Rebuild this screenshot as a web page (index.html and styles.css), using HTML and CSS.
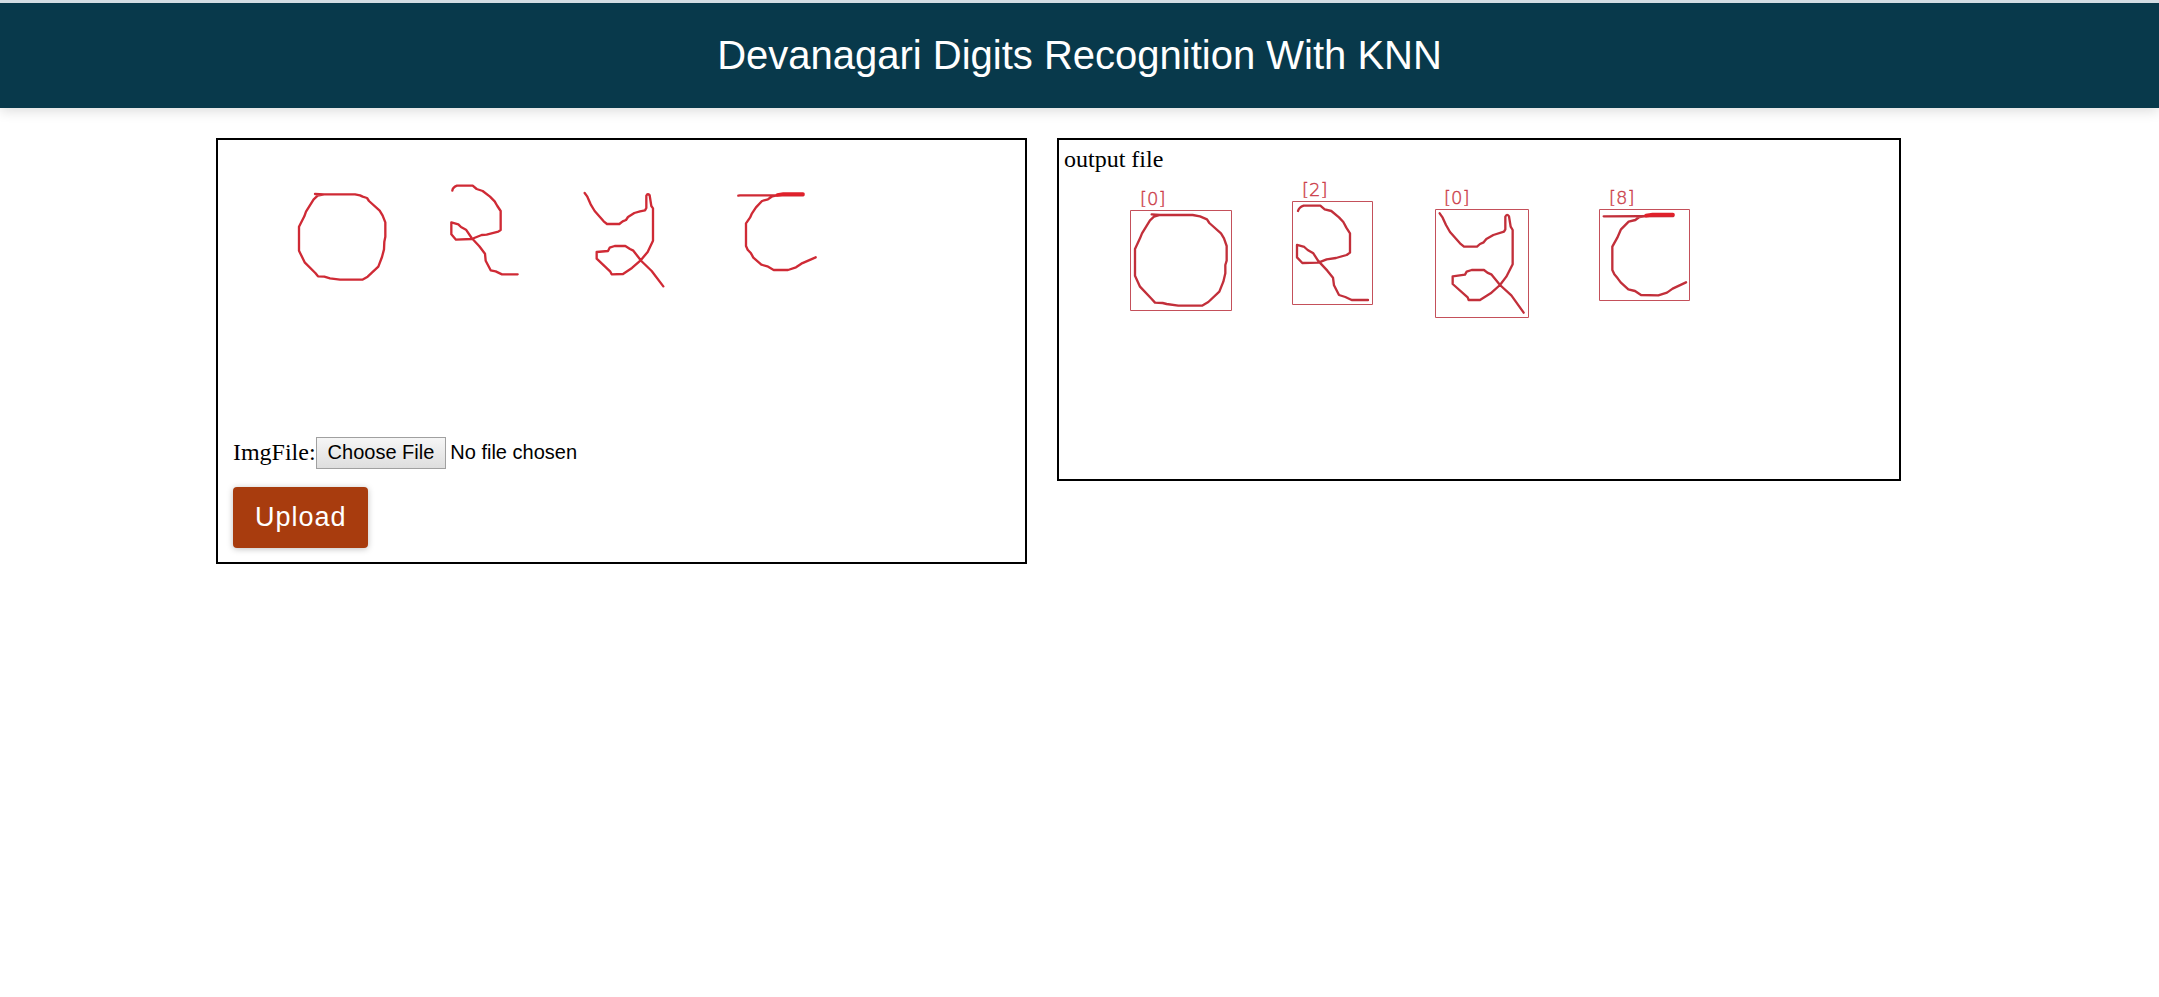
FILE: index.html
```html
<!DOCTYPE html>
<html lang="en">
<head>
<meta charset="utf-8">
<title>Devanagari Digits Recognition With KNN</title>
<link rel="stylesheet" href="styles.css">
</head>
<body>
<header class="banner">
  <h1 class="title">Devanagari Digits Recognition With KNN</h1>
</header>
<main class="content">
  <section class="panel panel-input">
    <svg class="drawing drawing-input" viewBox="233 140 777 297" preserveAspectRatio="xMinYMin meet" role="img" aria-label="Handwritten digits">
      <g class="ink" transform="translate(280 170) scale(.33333)">
        <path d="M105 72 L132 73 L225 73 L240 76 L248 80 L261 84 L267 93 L299 122 L308 137 L316 157 L316 200 L313 215 L312 238 L306 261 L295 290 L263 320 L247 329 L180 329 L150 325 L133 320 L114 319 L106 309 L74 277 L57 242 L57 170 L73 139 L78 125 L101 88 L113 77 L132 73"/>
        <path d="M517 62 Q518 52 531 47 L578 47 L590 57 L608 63 L630 80 L644 94 L652 108 L662 123 L662 180 L655 185 L620 194 L605 195 L575 207 L528 209 L514 193 L514 157 L535 163 L543 171 L558 179 L575 204 L598 229 L615 251 L617 272 L632 301 L647 304 L666 313 L713 313"/>
      </g>
      <g class="ink" transform="translate(540 170) scale(.33333)">
        <path d="M134 69 L142 80 L152 103 L164 123 L191 154 L201 162 L238 162 L248 154 L258 150 L264 141 L283 129 L300 124 L315 121 L319 114 L319 77 Q323 69 329 76 L334 108 L339 115 L339 212 L323 246 L301 272 L276 294 L249 312 L215 313 L211 305 L170 266 L170 246 L204 243 L209 233 L224 228 L256 228 L270 237 L280 242 L304 273 L335 303 L370 349"/>
        <path d="M595 77 L600 76 L790 76 M715 75 L697 79 L684 88 L666 93 L648 112 L636 130 L630 143 L618 160 L618 228 L623 239 L633 250 L640 263 L664 284 L682 289 L701 300 L744 300 L768 292 L784 281 L827 262"/>
        <path class="ink-heavy" d="M712 75 L730 72 L789 72"/>
      </g>
    </svg>
    <form class="upload-form">
      <div class="file-row">
        <label class="file-label" for="img-file">ImgFile:</label>
        <input class="file-input" type="file" id="img-file" name="img">
      </div>
      <button class="upload-button" type="button">Upload</button>
    </form>
  </section>
  <section class="panel panel-output">
    <p class="caption">output file</p>
    <svg class="drawing drawing-output" viewBox="1064 173 830 301" preserveAspectRatio="xMinYMin meet" role="img" aria-label="Recognized digits">
      <g class="boxes">
        <path d="M1130.500 210.500H1231.500V310.500H1130.500Z"/>
        <path d="M1292.500 201.500H1372.500V304.500H1292.500Z"/>
        <path d="M1435.500 209.500H1528.500V317.500H1435.500Z"/>
        <path d="M1599.500 209.500H1689.500V300.500H1599.500Z"/>
      </g>
      <g class="ink ink-output" transform="translate(1050 130) scale(.33333)">
        <path d="M305 253 L330 255 L428 255 L450 259 L471 268 L478 279 L513 310 L522 325 L530 348 L530 392 L526 405 L526 430 L520 455 L508 485 L475 516 L456 527 L385 527 L350 522 L338 519 L315 518 L303 505 L270 470 L255 437 L255 357 L270 325 L276 310 L300 271 L312 260 L330 255"/>
        <path d="M744 243 Q747 232 761 227 L811 227 L824 238 L844 243 L867 262 L880 276 L889 293 L900 310 L900 368 L890 375 L858 384 L830 388 L805 398 L757 399 L741 382 L741 345 L763 351 L773 360 L790 370 L804 392 L832 422 L849 443 L852 466 L867 495 L886 501 L905 510 L954 510"/>
      </g>
      <g class="ink ink-output" transform="translate(1400 170) scale(.33333)">
        <path d="M119 130 L128 143 L138 165 L150 186 L180 220 L192 230 L231 230 L240 222 L251 217 L259 207 L280 195 L312 185 L316 178 L316 140 Q321 130 327 139 L332 170 L338 180 L338 283 L319 320 L300 345 L272 370 L240 390 L206 390 L203 382 L158 342 L158 319 L195 314 L200 305 L215 300 L252 300 L262 308 L275 314 L300 345 L334 376 L371 428"/>
        <path d="M611 139 L820 138 M741 138 L718 141 L706 150 L686 155 L663 178 L652 203 L637 230 L637 300 L643 313 L653 325 L662 337 L685 358 L705 363 L723 375 L775 376 L801 368 L818 356 L858 337"/>
        <path class="ink-heavy" d="M738 137 L758 134 L819 134"/>
      </g>
      <g class="tags">
        <text x="1140" y="205">[0]</text>
        <text x="1302" y="196">[2]</text>
        <text x="1444" y="204">[0]</text>
        <text x="1609" y="204">[8]</text>
      </g>
    </svg>
  </section>
</main>
</body>
</html>
```
FILE: styles.css
```css
* {
  box-sizing: border-box;
}

body {
  margin: 0;
  background: #fff;
  color: #000;
  font-family: "Liberation Serif", "Times New Roman", serif;
  font-size: 24px;
  line-height: 28px;
}

.banner {
  display: flex;
  align-items: center;
  justify-content: center;
  height: 108px;
  padding-bottom: 2px;
  border-top: 3px solid #d3dde3;
  background: #08394b;
  box-shadow: 0 3px 12px rgba(0, 0, 0, 0.14);
}

.title {
  margin: 0;
  color: #fff;
  font-family: "Liberation Sans", Arial, sans-serif;
  font-size: 40px;
  font-weight: 400;
  line-height: 48px;
}

.content {
  display: grid;
  grid-template-columns: 811fr 844fr;
  align-items: start;
  gap: 30px;
  width: 80%;
  margin: 30px auto 0;
  padding-right: 42px;
}

.panel {
  border: 2px solid #000;
}

.panel-input {
  padding: 0 15px 14px;
}

.panel-output {
  padding: 5px;
}

.drawing {
  display: block;
  width: 100%;
}

.drawing-input {
  height: 297px;
}

.drawing-output {
  height: 301px;
}

.ink {
  fill: none;
  stroke: #cf2a35;
  stroke-width: 7;
  stroke-linecap: round;
  stroke-linejoin: round;
}

.ink-output {
  stroke: #c22f3a;
}

.ink-heavy {
  stroke: #e0212b;
  stroke-width: 11;
}

.boxes {
  fill: none;
  stroke: #c4505a;
  stroke-width: 1;
}

.tags {
  fill: #cc3f4b;
  stroke: #cc3f4b;
  stroke-width: 0.4px;
  font-family: "DejaVu Sans", sans-serif;
  font-size: 18px;
  font-weight: 200;
}

.file-row {
  display: flex;
  align-items: center;
  height: 32px;
  margin-bottom: 18px;
}

.file-label {
  padding-bottom: 2px;
}

.file-input {
  font-family: "Liberation Sans", Arial, sans-serif;
  font-size: 20px;
}

.file-input::file-selector-button {
  height: 32px;
  margin: 0 4px 0 0;
  padding: 0 11px 2px;
  border: 1px solid #a0a0a0;
  border-radius: 0;
  background: linear-gradient(#f6f6f6, #dedede);
  color: #000;
  font: inherit;
}

.upload-button {
  display: block;
  height: 61px;
  padding: 0 22px;
  border: 0;
  border-radius: 4px;
  background: #a83c0e;
  box-shadow: 0 1px 6px rgba(0, 0, 0, 0.25);
  color: #fff;
  font-family: "Liberation Sans", Arial, sans-serif;
  font-size: 27px;
  letter-spacing: 1px;
}

.caption {
  margin: 0;
}
```
